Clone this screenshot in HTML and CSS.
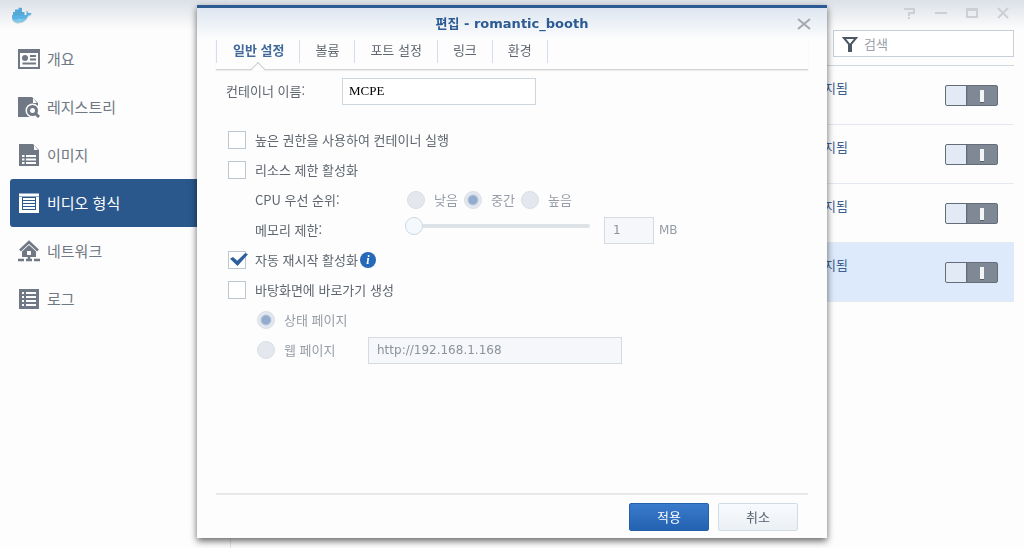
FILE: index.html
```
<!DOCTYPE html>
<html lang="ko">
<head>
    <meta charset="UTF-8">
    <meta name="viewport" content="width=device-width, initial-scale=1.0">
    <title>Docker</title>
    <link rel="stylesheet" href="styles.css">
</head>
<body>

    <div class="window">
        <aside class="sidebar">
            <svg class="logo" width="21" height="18" viewBox="0 0 21 18">
                <path d="M1 9h14c1-1 1-3 .3-4.400C17 5.500 17.500 6.500 17.500 7.300c1-.5 2.200-.4 3 .1-.6 1.300-1.800 1.900-3.200 1.900C15.800 13.500 12 16.500 7.500 16.500 3 16.500.6 14 1 9z" fill="#b5bfc7" opacity=".7"/>
                <path d="M1 8h14c1-1 1-3 .3-4.400C17 4.500 17.500 5.500 17.500 6.300c1-.5 2.200-.4 3 .1-.6 1.300-1.800 1.900-3.200 1.900C15.800 12.500 12 15.300 7.500 15.300 3 15.300.6 13 1 8z" fill="#58b3e4"/>
                <path d="M2 5h11.500v3.500H2zM4 2.500h7V5H4zM7.500.8h3.500V3H7.500z" fill="#55a9d6"/>
                <path d="M2 12.500c3 .6 5-.2 6-1.200 1.500 1 4 .8 6.500.2-1.700 2.500-4 3.800-7 3.800-2.700 0-4.500-.9-5.500-2.800z" fill="#7cc8ee"/>
            </svg>
            <nav class="menu">
                <a href="#">
                    <svg width="22" height="22" viewBox="0 0 22 22">
                        <path fill="currentColor" fill-rule="evenodd" d="M0 1h22v20H0zM2 5v14h18V5z"/>
                        <circle cx="7" cy="10" r="3" fill="currentColor"/>
                        <path d="M12 8h6M12 11.500h6M4.500 15.500H18" stroke="currentColor" stroke-width="2"/>
                    </svg>
                    개요
                </a>
                <a href="#">
                    <svg width="22" height="22" viewBox="0 0 22 22">
                        <path fill="currentColor" d="M0 1h14l6 6v14H0z"/>
                        <path fill="#fdfdfd" d="M15 2v5h4z"/>
                        <circle cx="14.500" cy="14.500" r="7" fill="#fdfdfd"/>
                        <path d="M17 17l5 5" stroke="#fdfdfd" stroke-width="6"/>
                        <circle cx="14.500" cy="14.500" r="4" fill="none" stroke="currentColor" stroke-width="3"/>
                        <path d="M17 17l4 4" stroke="currentColor" stroke-width="3"/>
                    </svg>
                    레지스트리
                </a>
                <a href="#">
                    <svg width="22" height="22" viewBox="0 0 22 22">
                        <path fill="currentColor" d="M1 0h14l6 6v16H1z"/>
                        <path fill="#fdfdfd" d="M16 1v5h4z"/>
                        <path d="M4 12h2.500M4 15.500h2.500M4 19h2.500M8 12h10M8 15.500h10M8 19h10" stroke="#fdfdfd" stroke-width="2"/>
                    </svg>
                    이미지
                </a>
                <a href="#" class="active">
                    <svg width="22" height="22" viewBox="0 0 22 22">
                        <path d="M1 3h20M1 19.500h20" stroke="currentColor" stroke-width="3"/>
                        <path d="M2.500 5v13M19.500 5v13" stroke="currentColor" stroke-width="3"/>
                        <path d="M5 7h12M5 10h12M5 13h12M5 16h12" stroke="currentColor" stroke-width="2"/>
                    </svg>
                    비디오 형식
                </a>
                <a href="#">
                    <svg width="22" height="22" viewBox="0 0 22 22">
                        <path d="M2 10.500L11 2l9 8.500" fill="none" stroke="currentColor" stroke-width="2.500"/>
                        <path fill="currentColor" fill-rule="evenodd" d="M11 5l7 6.500V17H4v-5.500zM9 11v4h4v-4z"/>
                        <path d="M11 16v4M0 20h6M8 20h6M16 20h6" stroke="currentColor" stroke-width="2.500"/>
                    </svg>
                    네트워크
                </a>
                <a href="#">
                    <svg width="22" height="22" viewBox="0 0 22 22">
                        <path fill="currentColor" d="M1 1h20v20H1z"/>
                        <path d="M4 5h2M4 9h2M4 13h2M4 17h2M8 5h10M8 9h10M8 13h10M8 17h10" stroke="#fdfdfd" stroke-width="2"/>
                    </svg>
                    로그
                </a>
            </nav>
        </aside>

        <main class="content">
            <div class="window-controls">
                <button aria-label="도움말"><svg width="14" height="12" viewBox="0 0 14 12"><path d="M1 2h10v4H6v3M5 11h2"/></svg></button>
                <button aria-label="최소화"><svg width="14" height="12" viewBox="0 0 14 12"><path d="M1 6h12"/></svg></button>
                <button aria-label="최대화"><svg width="14" height="12" viewBox="0 0 14 12"><path d="M2 2v8h10V2zM2 3h10"/></svg></button>
                <button aria-label="닫기"><svg width="14" height="12" viewBox="0 0 14 12"><path d="M2 1l10 10M12 1L2 11"/></svg></button>
            </div>
            <div class="search">
                <svg width="16" height="16" viewBox="0 0 16 16"><path d="M2 2h12L9 8v7H7V8z" fill="none" stroke="#4d5864" stroke-width="2"/></svg>
                <input type="text" placeholder="검색" aria-label="검색">
            </div>
            <ul class="containers">
                <li><span>중지됨</span><input type="checkbox" class="toggle" aria-label="전원"></li>
                <li><span>중지됨</span><input type="checkbox" class="toggle" aria-label="전원"></li>
                <li><span>중지됨</span><input type="checkbox" class="toggle" aria-label="전원"></li>
                <li class="selected"><span>중지됨</span><input type="checkbox" class="toggle" aria-label="전원"></li>
            </ul>
        </main>
    </div>

    <div class="overlay">
        <div class="dialog" role="dialog" aria-labelledby="dialogTitle">
            <div class="dialog-head">
                <h1 id="dialogTitle">편집 - romantic_booth</h1>
                <button class="close-btn" aria-label="닫기"><svg width="14" height="14" viewBox="0 0 14 14"><path d="M1 2l12 10M13 2L1 12" stroke="#a4a9b0" stroke-width="2"/></svg></button>
            </div>
            <nav class="tabs">
                <a href="#" class="active">일반 설정</a>
                <a href="#">볼륨</a>
                <a href="#">포트 설정</a>
                <a href="#">링크</a>
                <a href="#">환경</a>
            </nav>

            <form class="settings">
                <div class="row name-row">
                    <label for="name">컨테이너 이름:</label>
                    <input type="text" id="name" class="name" value="MCPE">
                </div>
                <div class="row">
                    <input type="checkbox" id="privileged">
                    <label for="privileged">높은 권한을 사용하여 컨테이너 실행</label>
                </div>
                <div class="row">
                    <input type="checkbox" id="limit">
                    <label for="limit">리소스 제한 활성화</label>
                </div>
                <div class="row sub">
                    <span class="caption">CPU 우선 순위:</span>
                    <div class="priorities">
                        <input type="radio" name="cpu" id="low" disabled>
                        <label for="low">낮음</label>
                        <input type="radio" name="cpu" id="mid" checked disabled>
                        <label for="mid">중간</label>
                        <input type="radio" name="cpu" id="high" disabled>
                        <label for="high">높음</label>
                    </div>
                </div>
                <div class="row sub">
                    <label class="caption" for="memory">메모리 제한:</label>
                    <input type="range" id="memory" min="0" max="100" value="0" disabled>
                    <input type="text" class="memory-size" id="memorySize" value="1" disabled>
                    <label class="unit" for="memorySize">MB</label>
                </div>
                <div class="row">
                    <input type="checkbox" id="restart" checked>
                    <label for="restart">자동 재시작 활성화</label>
                    <span class="info">i</span>
                </div>
                <div class="row">
                    <input type="checkbox" id="shortcut">
                    <label for="shortcut">바탕화면에 바로가기 생성</label>
                </div>
                <div class="row sub">
                    <input type="radio" name="page" id="statusPage" checked disabled>
                    <label for="statusPage">상태 페이지</label>
                </div>
                <div class="row sub">
                    <input type="radio" name="page" id="webPage" disabled>
                    <label for="webPage" class="web-label">웹 페이지</label>
                    <input type="text" class="url" value="http://192.168.1.168" aria-label="웹 페이지 주소" disabled>
                </div>
            </form>

            <div class="dialog-foot">
                <button class="btn primary">적용</button>
                <button class="btn">취소</button>
            </div>
        </div>
    </div>

</body>
</html>
```
FILE: styles.css
```
* {
    box-sizing: border-box;
}
body {
    margin: 0;
    background: #fdfdfd;
    font-family: "Noto Sans CJK KR", sans-serif;
    font-size: 13px;
    line-height: 20px;
    color: #5f666f;
}
button, input {
    font: inherit;
    margin: 0;
}
button {
    cursor: pointer;
}
a {
    color: inherit;
    text-decoration: none;
}

/* main window */
.window {
    display: flex;
    min-height: 100vh;
    background: linear-gradient(to bottom, #dce1e7, #fdfdfd 30px);
}
.sidebar {
    width: 231px;
    flex: none;
    padding-left: 10px;
    border-right: 1px solid #e4e6e9;
}
.logo {
    display: block;
    height: 18px;
    margin: 7px 0 10px 1px;
}
.menu a {
    display: flex;
    align-items: center;
    gap: 7px;
    height: 48px;
    padding-left: 8px;
    font-size: 15px;
    color: #6f7884;
    border-radius: 3px;
}
.menu a.active {
    background: #2a588c;
    color: #fff;
}
.content {
    flex: 1;
    padding-right: 10px;
}
.window-controls {
    display: flex;
    justify-content: flex-end;
    gap: 17px;
    height: 30px;
    padding-top: 7px;
    padding-right: 4px;
}
.window-controls button {
    width: 14px;
    height: 12px;
    padding: 0;
    border: none;
    background: none;
}
.window-controls svg {
    display: block;
    fill: none;
    stroke: #cccfd3;
    stroke-width: 2;
}
.search {
    display: flex;
    align-items: center;
    gap: 6px;
    width: 181px;
    height: 27px;
    margin-left: auto;
    padding-left: 8px;
    border: 1px solid #c5d0db;
    background: #fff;
}
.search input {
    flex: 1;
    min-width: 0;
    padding: 0;
    border: none;
    outline: none;
    background: none;
}
.search input::placeholder {
    color: #9aa1aa;
}
.containers {
    list-style: none;
    margin: 8px 0 0;
    padding: 0;
    border-top: 1px solid #cfd8e2;
}
.containers li {
    display: flex;
    justify-content: flex-end;
    align-items: center;
    height: 59px;
    gap: 97px;
    padding-right: 16px;
    border-bottom: 1px solid #e3e9ef;
    color: #3d6090;
}
.containers li.selected {
    background: #dceafb;
}
.containers span {
    align-self: flex-start;
    margin-top: 12px;
}
.toggle {
    appearance: none;
    position: relative;
    width: 53px;
    height: 21px;
    border: 1px solid #646d78;
    border-radius: 2px;
    background: linear-gradient(to right, #e2ebf5 20px, #5b6570 20px, #7f8995 22px);
}
.toggle::after {
    content: "";
    position: absolute;
    top: 4px;
    right: 13px;
    width: 4px;
    height: 12px;
    background: #f3f5f7;
    border-bottom: 1px solid #555e69;
}

/* edit dialog */
.overlay {
    position: fixed;
    inset: 0;
    display: flex;
    justify-content: center;
    align-items: flex-start;
    padding-top: 5px;
}
.dialog {
    display: flex;
    flex-direction: column;
    width: 630px;
    min-height: 533px;
    padding: 0 16px 0 19px;
    border-top: 3px solid #2c5b93;
    background: linear-gradient(to bottom, #dde6f0, #fdfdfd 32px);
    box-shadow: 0 3px 7px rgba(0, 0, 0, 0.6);
}
.dialog-head {
    display: flex;
    align-items: center;
    height: 32px;
}
.dialog-head h1 {
    flex: 1;
    margin: 0;
    padding-left: 11px;
    text-align: center;
    font-family: "DejaVu Sans", "Noto Sans CJK KR", sans-serif;
    font-size: 13px;
    color: #2c5b93;
}
.close-btn {
    width: 14px;
    height: 14px;
    padding: 0;
    border: none;
    background: none;
}
.close-btn svg {
    display: block;
}
.tabs {
    display: flex;
    height: 30px;
    margin-right: 3px;
    border-bottom: 1px solid #d2d4d6;
    box-shadow: 0 1px 1px #ececec;
}
.tabs a {
    position: relative;
    height: 23px;
    padding: 0 15px;
    border-right: 1px solid #d3deea;
}
.tabs a.active {
    padding-left: 16px;
    border-left: 1px solid #d3deea;
    font-weight: bold;
    color: #41699c;
}
.tabs a.active::after {
    content: "";
    position: absolute;
    left: 50%;
    bottom: -11px;
    width: 9px;
    height: 9px;
    margin-left: -5px;
    border-top: 1px solid #cbcdd0;
    border-left: 1px solid #cbcdd0;
    background: linear-gradient(135deg, #fdfdfd 60%, transparent 60%);
    transform: rotate(45deg);
}
.settings {
    flex: 1;
    padding: 6px 10px;
}
.row {
    display: flex;
    align-items: center;
    height: 30px;
}
.row.sub {
    padding-left: 29px;
}
.name-row {
    margin-bottom: 19px;
}
.name-row label {
    width: 116px;
}
.caption {
    width: 150px;
}
input[type="text"]:disabled {
    border-color: #d5dbe1;
    background: #f5f7fa;
    color: #8d939b;
}
.name, .url, .memory-size {
    height: 27px;
    padding: 0 8px;
    border: 1px solid #cbd6df;
    background: #fff;
    font-family: "DejaVu Sans", sans-serif;
    font-size: 12px;
}
.name {
    width: 194px;
    padding: 0 6px;
    font-family: "Liberation Serif", serif;
    font-size: 13px;
    color: #000;
}
.url {
    width: 254px;
}
.memory-size {
    width: 50px;
    margin-left: 14px;
}
.unit {
    margin-left: 5px;
    font-family: "DejaVu Sans", sans-serif;
    font-size: 12px;
    color: #8d939b;
}
.row input[type="checkbox"] {
    appearance: none;
    width: 18px;
    height: 18px;
    margin: 0 9px 0 2px;
    border: 1px solid #bcc7d2;
    background: #fff;
    position: relative;
}
.row input[type="checkbox"]:checked::after {
    content: "";
    position: absolute;
    left: 1px;
    top: 1px;
    width: 18px;
    height: 13px;
    background: #2c5f9e;
    clip-path: polygon(0 45%, 17% 30%, 40% 60%, 85% 0, 100% 10%, 42% 100%);
}
.row input[type="radio"] {
    appearance: none;
    width: 18px;
    height: 18px;
    margin: 0 9px 0 2px;
    border: 1px solid #d8dee5;
    border-radius: 50%;
    background: #e4e8ee;
}
.row input[type="radio"]:checked {
    background: radial-gradient(circle, #93acce 4px, #e4e8ee 6px);
}
input:disabled + label {
    color: #969ca6;
}
.priorities {
    display: flex;
    align-items: center;
    gap: 4px;
}
.priorities input[type="radio"] {
    margin-right: 5px;
}
.priorities label {
    width: 24px;
}
input[type="range"] {
    appearance: none;
    align-self: flex-start;
    width: 185px;
    height: 22px;
    background: none;
}
input[type="range"]::-webkit-slider-runnable-track {
    height: 4px;
    border-radius: 2px;
    background: #dde3e6;
}
input[type="range"]::-webkit-slider-thumb {
    appearance: none;
    width: 18px;
    height: 18px;
    margin-top: -7px;
    border: 1px solid #cdd8e1;
    border-radius: 50%;
    background: #f4f9fe;
}
.info {
    width: 16px;
    height: 16px;
    margin-left: 2px;
    border-radius: 50%;
    background: #2569b8;
    color: #fff;
    font: italic bold 12px/16px "Liberation Serif", serif;
    text-align: center;
}
.web-label {
    width: 84px;
}
.dialog-foot {
    display: flex;
    justify-content: flex-end;
    gap: 9px;
    margin-right: 3px;
    padding: 8px 10px 7px;
    border-top: 2px solid #e8e8e8;
}
.btn {
    width: 80px;
    height: 28px;
    padding: 0;
    border: 1px solid #d2dce5;
    border-radius: 2px;
    background: linear-gradient(to bottom, #f8fbfe, #ebf0f4);
    color: #5a626c;
}
.btn.primary {
    border-color: #2561ab;
    background: linear-gradient(to bottom, #3a7bcb, #2362b1);
    color: #fff;
}
```
